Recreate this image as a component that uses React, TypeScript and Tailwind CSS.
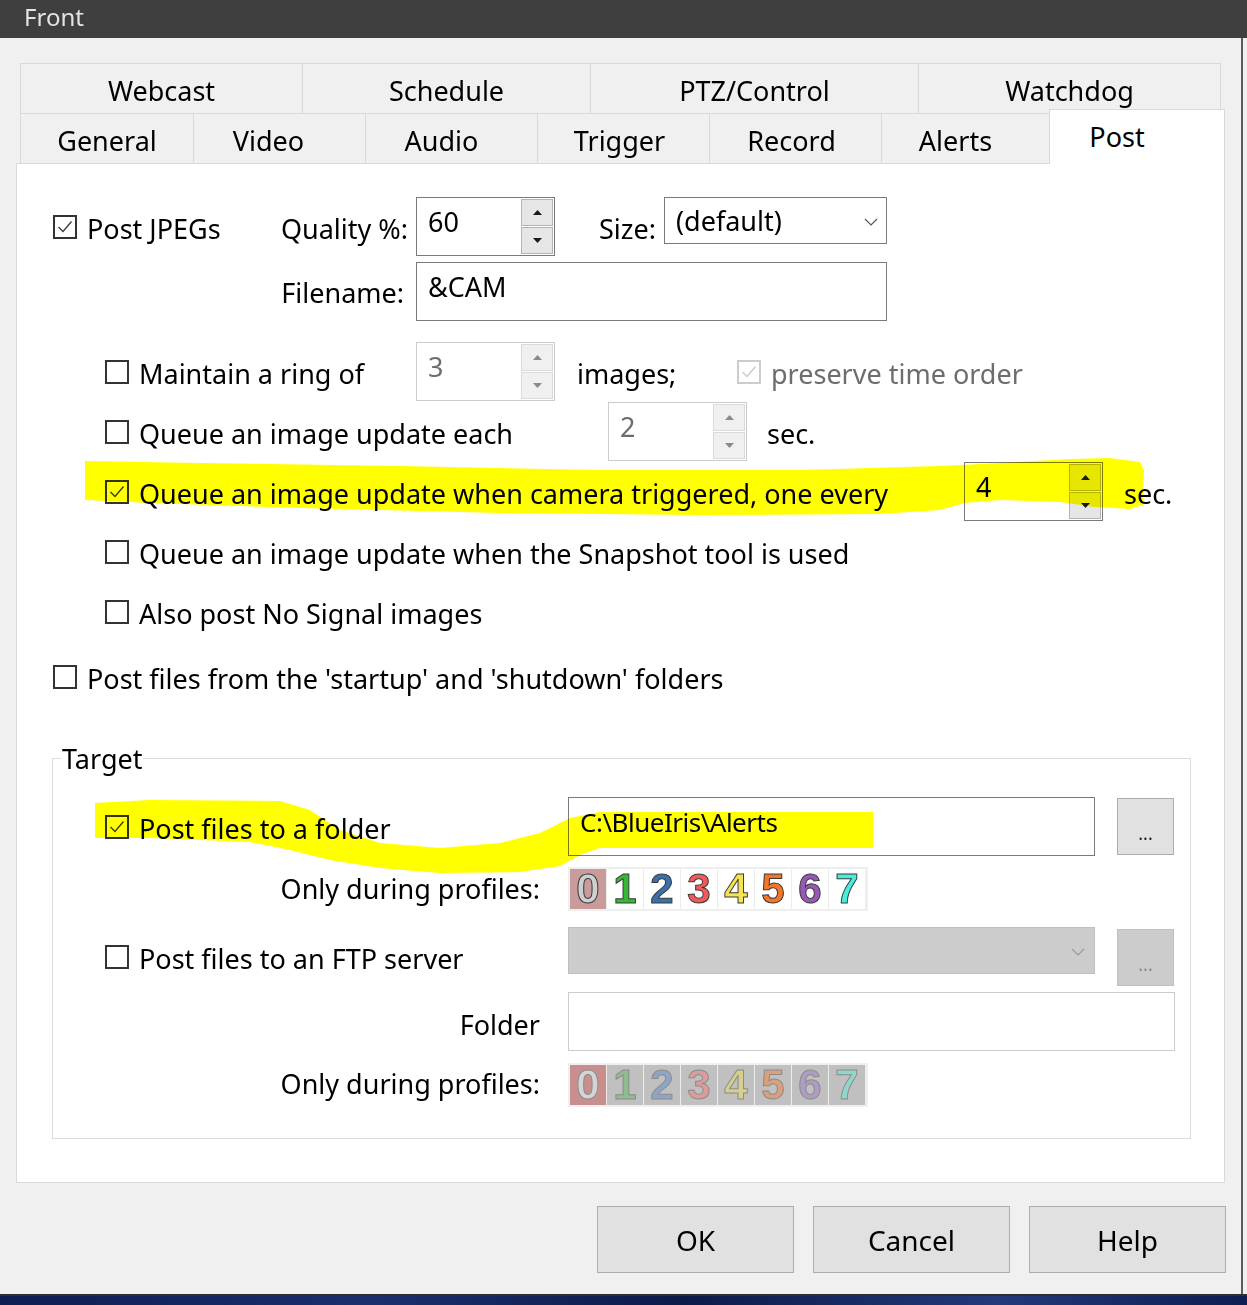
import React from "react";

// colours for the profile digits 0..7
const digitOn = [
  "text-[#cfcfcf]",
  "text-[#35b835]",
  "text-[#3a6fa8]",
  "text-[#f25a5a]",
  "text-[#f6e44e]",
  "text-[#f47526]",
  "text-[#9a58b6]",
  "text-[#45efdc]",
];
const digitOff = [
  "text-[#d4d4d4]",
  "text-[#8fbd8f]",
  "text-[#8ea6c4]",
  "text-[#dd9c9c]",
  "text-[#d6cf8e]",
  "text-[#dc9f7c]",
  "text-[#ae9cc2]",
  "text-[#8fd6cc]",
];

const Check = ({ checked, disabled }: { checked?: boolean; disabled?: boolean }) => (
  <div
    className={`w-[24px] h-[24px] shrink-0 border-2 flex items-center justify-center ${
      disabled ? "border-[#cccccc]" : "border-[#333333]"
    }`}
  >
    {checked && (
      <svg width="18" height="18" viewBox="0 0 18 18">
        <polyline
          points="2.5,9 7,13.5 15.5,3.5"
          fill="none"
          stroke={disabled ? "#c8c8c8" : "#3a3a3a"}
          strokeWidth="1.3"
        />
      </svg>
    )}
  </div>
);

const CheckRow = ({
  label,
  checked,
  disabled,
  className,
}: {
  label: string;
  checked?: boolean;
  disabled?: boolean;
  className?: string;
}) => (
  <div className={`flex items-start shrink-0 ${className ?? ""}`}>
    <div className="mt-[18px]">
      <Check checked={checked} disabled={disabled} />
    </div>
    <span
      className={`ml-[10px] mt-[16px] whitespace-nowrap ${
        disabled ? "text-[#6d6d6d]" : ""
      }`}
    >
      {label}
    </span>
  </div>
);

const Arrow = ({ up, color }: { up?: boolean; color: string }) => (
  <svg width="9" height="5" viewBox="0 0 9 5">
    <polygon points={up ? "0,5 4.5,0 9,5" : "0,0 4.5,5 9,0"} fill={color} />
  </svg>
);

const Spinner = ({ value, disabled }: { value: string; disabled?: boolean }) => (
  <div
    className={`flex w-[139px] h-[59px] shrink-0 border bg-white ${
      disabled ? "border-[#cccccc]" : "border-[#7a7a7a]"
    }`}
  >
    <div className={`flex-1 pl-[11px] pt-[8px] ${disabled ? "text-[#6d6d6d]" : ""}`}>
      {value}
    </div>
    <div className="w-[33px] flex flex-col gap-[1px] py-[1px] pr-[1px]">
      <div
        className={`h-[27px] border flex items-center justify-center ${
          disabled ? "border-[#dadada] bg-[#f0f0f0]" : "border-[#b4b4b4] bg-[#e6e6e6]"
        }`}
      >
        <Arrow up color={disabled ? "#8a8a8a" : "#1a1a1a"} />
      </div>
      <div
        className={`flex-1 border flex items-center justify-center ${
          disabled ? "border-[#dadada] bg-[#f0f0f0]" : "border-[#b4b4b4] bg-[#e6e6e6]"
        }`}
      >
        <Arrow color={disabled ? "#8a8a8a" : "#1a1a1a"} />
      </div>
    </div>
  </div>
);

const Chevron = ({ color }: { color: string }) => (
  <svg width="14" height="8" viewBox="0 0 14 8">
    <polyline points="1,1 7,7 13,1" fill="none" stroke={color} strokeWidth="1.2" />
  </svg>
);

const DotsButton = ({ disabled }: { disabled?: boolean }) => (
  <div
    className={`w-[57px] h-[57px] border flex items-end justify-center pb-[12px] text-[18px] leading-none ${
      disabled
        ? "bg-[#cccccc] border-[#bfbfbf] text-[#8a8a8a]"
        : "bg-[#e1e1e1] border-[#adadad] text-[#222]"
    }`}
  >
    ...
  </div>
);

const Profiles = ({ disabled }: { disabled?: boolean }) => (
  <div className="w-[300px] h-[44px] bg-[#efefef] p-[2px] flex">
    {[0, 1, 2, 3, 4, 5, 6, 7].map((n) => (
      <div
        key={n}
        className={`w-[37px] h-[40px] flex items-center justify-center border-r border-[#ececec] font-['Liberation_Sans',sans-serif] font-bold text-[42px] leading-[40px] ${
          n === 0
            ? disabled
              ? "bg-[#c98f8f]"
              : "bg-[#c99b9b]"
            : disabled
            ? "bg-[#c0c0c0]"
            : "bg-white"
        } ${disabled ? digitOff[n] : digitOn[n]} ${
          disabled ? "[-webkit-text-stroke:1px_#8c8c8c]" : "[-webkit-text-stroke:1px_#3a3a3a]"
        }`}
      >
        {n}
      </div>
    ))}
  </div>
);

const topTabs = [
  { name: "Webcast", w: "w-[282px]" },
  { name: "Schedule", w: "w-[288px]" },
  { name: "PTZ/Control", w: "w-[328px]" },
  { name: "Watchdog", w: "w-[303px] border-r" },
];
const lowTabs = [
  { name: "General", w: "w-[173px]" },
  { name: "Video", w: "w-[172px] pr-[22px]" },
  { name: "Audio", w: "w-[172px] pr-[20px]" },
  { name: "Trigger", w: "w-[172px] pr-[8px]" },
  { name: "Record", w: "w-[172px] pr-[8px]" },
  { name: "Alerts", w: "w-[168px] pr-[20px]" },
];

export default function App() {
  return (
    <div className="relative w-[1247px] h-[1305px] overflow-hidden bg-[#f0f0f0] text-black font-['Noto_Sans',sans-serif] text-[27px] leading-[32px]">
      {/* title bar */}
      <div className="h-[38px] bg-[#3f3f3f] text-[#e4e4e4] text-[24px] leading-[34px] pl-[24px]">
        Front
      </div>

      <div className="flex h-[1256px]">
        <div className="w-[1241px] pl-[16px]">
          {/* tabs */}
          <div className="ml-[4px] mt-[25px]">
            <div className="flex h-[50px]">
              {topTabs.map((t) => (
                <div
                  key={t.name}
                  className={`${t.w} border-t border-l border-[#d9d9d9] flex justify-center pt-[11px]`}
                >
                  {t.name}
                </div>
              ))}
            </div>
            <div className="flex items-start h-[50px]">
              {lowTabs.map((t) => (
                <div
                  key={t.name}
                  className={`${t.w} h-[50px] border-t border-l border-[#d9d9d9] flex justify-center pt-[11px]`}
                >
                  {t.name}
                </div>
              ))}
              <div className="relative z-10 w-[176px] h-[55px] -mt-[4px] bg-white border-t border-l border-r border-[#d9d9d9] flex justify-center pt-[11px] pr-[40px]">
                Post
              </div>
            </div>
          </div>

          {/* tab page */}
          <div className="w-[1209px] h-[1020px] border border-[#d9d9d9] bg-white">
            {/* Post JPEGs */}
            <div className="flex items-start mt-[33px] h-[59px]">
              <CheckRow label="Post JPEGs" checked className="ml-[36px] w-[207px]" />
              <span className="w-[156px] text-right pr-[8px] mt-[16px]">Quality %:</span>
              <Spinner value="60" />
              <span className="w-[109px] text-right pr-[8px] mt-[16px]">Size:</span>
              <div className="w-[223px] h-[47px] border border-[#7a7a7a] flex justify-between items-start pl-[11px] pt-[7px]">
                <span>(default)</span>
                <div className="mt-[13px] mr-[8px]">
                  <Chevron color="#555555" />
                </div>
              </div>
            </div>

            <div className="flex items-start mt-[6px] h-[59px]">
              <span className="w-[399px] text-right pr-[12px] mt-[15px]">Filename:</span>
              <div className="w-[471px] h-[59px] border border-[#7a7a7a] pl-[11px] pt-[8px]">&amp;CAM</div>
            </div>

            <div className="flex items-start mt-[21px] h-[60px]">
              <CheckRow label="Maintain a ring of" className="ml-[88px] w-[311px]" />
              <Spinner value="3" disabled />
              <span className="ml-[22px] w-[160px] mt-[16px]">images;</span>
              <CheckRow label="preserve time order" checked disabled />
            </div>

            <div className="flex items-start h-[60px]">
              <CheckRow label="Queue an image update each" className="ml-[88px] w-[503px]" />
              <Spinner value="2" disabled />
              <span className="ml-[20px] mt-[16px]">sec.</span>
            </div>

            <div className="flex items-start h-[60px]">
              <CheckRow
                label="Queue an image update when camera triggered, one every"
                checked
                className="ml-[88px] w-[859px]"
              />
              <Spinner value="4" />
              <span className="ml-[21px] mt-[16px]">sec.</span>
            </div>

            <div className="flex items-start h-[60px]">
              <CheckRow label="Queue an image update when the Snapshot tool is used" className="ml-[88px]" />
            </div>
            <div className="flex items-start h-[60px]">
              <CheckRow label="Also post No Signal images" className="ml-[88px]" />
            </div>
            <div className="flex items-start mt-[5px] h-[60px]">
              <CheckRow
                label="Post files from the 'startup' and 'shutdown' folders"
                className="ml-[36px]"
              />
            </div>

            {/* Target group */}
            <fieldset className="mt-[34px] ml-[35px] w-[1139px] border border-[#dcdcdc] pb-[31px]">
              <legend className="ml-[8px] px-[1px] pt-[2px]">Target</legend>

              <div className="flex items-start mt-[22px] h-[59px]">
                <CheckRow label="Post files to a folder" checked className="ml-[52px] w-[463px]" />
                <div className="w-[527px] h-[59px] border border-[#7a7a7a] pl-[11px] pt-[8px] text-[26px] tracking-[-0.5px]">
                  C:\BlueIris\Alerts
                </div>
                <div className="ml-[22px] mt-[1px]">
                  <DotsButton />
                </div>
              </div>

              <div className="flex items-start mt-[11px] h-[44px]">
                <span className="w-[515px] text-right pr-[28px] mt-[6px]">Only during profiles:</span>
                <Profiles />
              </div>

              <div className="flex items-start mt-[16px] h-[58px]">
                <CheckRow label="Post files to an FTP server" className="ml-[52px] w-[463px]" />
                <div className="w-[527px] h-[47px] border border-[#bfbfbf] bg-[#cccccc] flex justify-end items-start pt-[20px] pr-[9px]">
                  <Chevron color="#9a9a9a" />
                </div>
                <div className="ml-[22px] mt-[2px]">
                  <DotsButton disabled />
                </div>
              </div>

              <div className="flex items-start mt-[7px] h-[59px]">
                <span className="w-[515px] text-right pr-[28px] mt-[17px]">Folder</span>
                <div className="w-[607px] h-[59px] border border-[#cccccc] bg-white" />
              </div>

              <div className="flex items-start mt-[12px] h-[44px]">
                <span className="w-[515px] text-right pr-[28px] mt-[5px]">Only during profiles:</span>
                <Profiles disabled />
              </div>
            </fieldset>
          </div>

          {/* dialog buttons */}
          <div className="flex gap-[19px] mt-[23px] ml-[581px] text-[28px]">
            {["OK", "Cancel", "Help"].map((b) => (
              <div
                key={b}
                className="w-[197px] h-[67px] bg-[#e1e1e1] border border-[#adadad] flex items-center justify-center"
              >
                {b}
              </div>
            ))}
          </div>
        </div>
        <div className="w-[2px] bg-[#5c5c5c]" />
        <div className="flex-1 bg-[#f0f0f0]" />
      </div>

      <div className="h-[2px] bg-[#2e2e2e]" />
      <div className="h-[9px] bg-[linear-gradient(90deg,#0e1d52,#1b2f6e_30%,#0c1a48_55%,#22397a_80%,#0e1d52)]" />

      {/* highlighter strokes */}
      <svg
        className="absolute left-0 top-0 pointer-events-none mix-blend-multiply"
        width="1247"
        height="1305"
        viewBox="0 0 1247 1305"
      >
        <path
          fill="#ffff00"
          d="M85,461 L200,463 L400,466 L600,470 L800,470 L940,466 L1000,463 L1070,459 L1110,458 L1140,462 L1144,470 L1143,505 L1130,509 L1095,507 L1060,502 L1000,500 L965,503 L940,510 L880,514 L700,515 L500,513 L300,508 L150,503 L85,500 Z"
        />
        <path
          fill="#ffff00"
          d="M95,803 L150,800 L280,801 L310,810 L340,830 L380,843 L440,848 L500,843 L540,833 L570,818 L600,812 L873,812 L873,848 L600,848 L580,855 L560,866 L520,872 L440,873 L380,868 L330,860 L290,850 L250,842 L150,838 L95,838 Z"
        />
      </svg>
    </div>
  );
}
